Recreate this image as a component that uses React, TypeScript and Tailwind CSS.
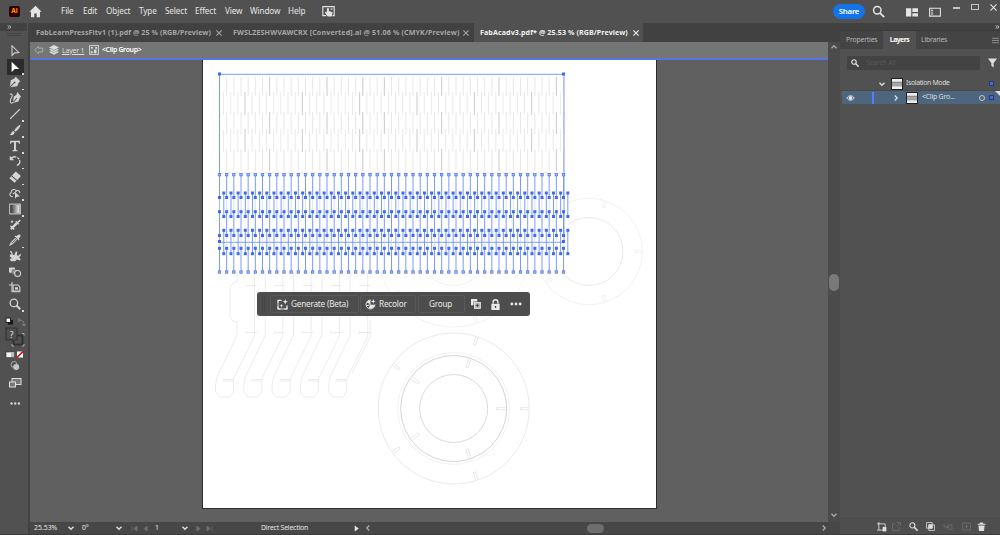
import React from "react";

const COLS = Array.from({ length: 49 }, (_, k) => 219.5 + k * 7.167);

const Svg = ({ c = "", vb = "0 0 16 16", children }: { c?: string; vb?: string; children: React.ReactNode }) => (
  <svg viewBox={vb} className={"shrink-0 " + c} fill="none" stroke="currentColor" strokeWidth="1.4">
    {children}
  </svg>
);

const Chevron = ({ c = "", d }: { c?: string; d: string }) => (
  <Svg c={"h-2 w-2 " + c}>
    <path d={d} strokeWidth="2.6" />
  </Svg>
);
const DOWN = "M3 5.5l5 5 5-5";
const UP = "M3 10.5l5-5 5 5";
const RIGHT = "M5.5 3l5 5-5 5";
const LEFT = "M10.5 3l-5 5 5 5";

const menu = [
  { t: "File", w: "w-[22px]" },
  { t: "Edit", w: "w-[23px]" },
  { t: "Object", w: "w-[33px]" },
  { t: "Type", w: "w-[26px]" },
  { t: "Select", w: "w-[30px]" },
  { t: "Effect", w: "w-[30px]" },
  { t: "View", w: "w-[25px]" },
  { t: "Window", w: "w-[38px]" },
  { t: "Help", w: "w-[34px]" },
];

function TopBar() {
  return (
    <header className="flex h-[23px] shrink-0 items-center bg-[#515151] text-[#e4e4e4]">
      <div className="ml-[9px] flex h-[11px] w-[11px] items-center justify-center rounded-[2px] bg-[#330000] text-[6.5px] font-bold leading-none text-[#ff9a00]">
        Ai
      </div>
      <Svg c="ml-[9px] mr-[19px] h-[13px] w-[13px]">
        <path d="M8 1L.5 8.200h2V15h4v-4.500h3V15h4V8.200h2z" fill="currentColor" stroke="none" />
      </Svg>
      {menu.map((m) => (
        <span key={m.t} className={"shrink-0 whitespace-nowrap text-[8.200px] leading-none tracking-[-0.120px] " + m.w}>
          {m.t}
        </span>
      ))}
      <Svg c="h-[13px] w-[13px]">
        <path d="M5 13H1V2h14v11h-2" />
        <path d="M6 4v5L4.500 8.200 3.500 9.500 7 14h5l1-5-4.500-1.500V4z" fill="currentColor" stroke="none" />
        <path d="M10.500 5h2.500" />
      </Svg>
      <div className="flex-1" />
      <div className="flex h-[15px] w-[32px] items-center justify-center rounded-full bg-[#1473e6] text-[7.800px] font-semibold leading-none tracking-[-0.250px] text-white">
        Share
      </div>
      <Svg c="ml-[7px] h-[13px] w-[13px]">
        <circle cx="6.500" cy="6.500" r="4.600" strokeWidth="1.800" />
        <path d="M10 10l5 5" strokeWidth="2.200" />
      </Svg>
      <Svg c="ml-[21px] h-[12px] w-[12px]">
        <path d="M0 3h7v11H0zM8.500 3H16v5H8.500zM8.500 9.500H16V14H8.500z" fill="currentColor" stroke="none" />
      </Svg>
      <Svg c="ml-[11px] h-[12px] w-[12px]">
        <path d="M.800 3h14.400v10.500H.800z" />
        <path d="M2.500 5h3v1.300h-3zM2.500 7.500h3v1.300h-3zM2.500 10h3v1.300h-3z" fill="currentColor" stroke="none" />
      </Svg>
      <div className="ml-[12px] mt-[-7px] h-[2px] w-[7px] bg-[#c4c4c4]" />
      <div className="ml-[11px] mt-[-10px] h-[6px] w-[8px] border-[1.500px] border-[#c4c4c4]" />
      <Svg c="ml-[11px] mr-[3px] mt-[-9px] h-[7px] w-[7px]">
        <path d="M1 1l14 14M15 1L1 15" strokeWidth="2.500" />
      </Svg>
    </header>
  );
}

const solid = { fill: "currentColor", stroke: "none" };

const tools: { i: React.ReactNode; sel?: boolean; corner?: boolean }[] = [
  { i: <path d="M4 1v13l3.500-3.500L13 10z" /> },
  { i: <path d="M3.500 1v14l4-4.200 6-.3z" {...solid} />, sel: true, corner: true },
  { i: <g><path d="M9 1l6 6-2 1.500-2 5L1 15l1.500-9.500 5-2.500z" {...solid} /><path d="M1.500 14.500L7 9" stroke="#515151" /><circle cx="7.500" cy="8.500" r="1.200" fill="#515151" stroke="none" /></g>, corner: true },
  { i: <g><path d="M11 0l5 6-1.500 1.500-2 5L5 14.500 6.500 6l3.500-2.500z" {...solid} /><path d="M5.500 14L10.500 8" stroke="#515151" /><path d="M1 3c2-1 4 0 3 3s-4 6-1.500 8.500c1 .8 2.500 0 3-1" /></g> },
  { i: <path d="M1.500 14.500l13-13" strokeWidth="1.700" />, corner: true },
  { i: <path d="M15.500.500c-3 1-7 5-8.500 8l1.700 1.700C12 8 15 4 15.500.500zM6 9.200c-2 0-2.500 1.500-3 3C2.700 13.500 1.500 14 .500 14c2 1.700 6.500 1.500 7-3z" {...solid} />, corner: true },
  { i: <path d="M1.500 1h13v4h-1.200L12.500 3H9.300v10l2 .7V15H4.700v-1.300l2-.7V3H3.500l-.8 2H1.500z" {...solid} />, corner: true },
  { i: <g><path d="M2 6c2-4 8-5 11-1s1 8-3 9" strokeDasharray="9 1.500 3 1.500" strokeWidth="1.800" /><path d="M1 1v6h6z" {...solid} /></g>, corner: true },
  { i: <g><path d="M9 .500l7 6-8.500 9-7-6z" {...solid} /><path d="M3.500 6.500l7 6" stroke="#515151" /></g>, corner: true },
  { i: <g><path d="M5 13c-4 0-5-4-2-6 0-4 5-5 7-2 3-1 5 1 4 3" /><path d="M5 9c2-1 3-1 5-4" /><path d="M8 6.500v9l2.500-2.500 4-.2z" {...solid} /></g>, corner: true },
  { i: <g><rect x="1" y="1.500" width="14" height="13" /><rect x="2" y="2.500" width="12" height="11" fill="url(#tg)" stroke="none" /></g>, corner: true },
  { i: <g><path d="M2.500 13.500L10.500 5.500" strokeWidth="3.400" /><path d="M10 6l5-4.500M9 3l4 4M2 9l5 5" strokeWidth="1.800" /><path d="M2.500 3.500h3M4 2v3" /></g> },
  { i: <g><path d="M15 1c-2-1-3.500.5-5 2L8.500 2 7.500 3l5.500 5.500 1-1L13 6c2-1.500 3-3.500 2-5z" {...solid} /><path d="M9 5.500l-6 6-1.500 3 3-1.500 6-6" /></g>, corner: true },
  { i: <path d="M1 1l3 1 1 4 2 1 2-5 2 0-.5 5 2 .5L15 5l1 1.500-2.500 3.500 2 2-1 2-4-1.500L8 15H2.500L1 12l3-1-3-2.500L1.500 6l2-.5z" {...solid} /> },
  { i: <g><rect x="0" y="2" width="8" height="7" rx="1" {...solid} /><rect x="4" y="5" width="7" height="6" rx="1" fill="#999" stroke="#555" strokeWidth=".7" /><circle cx="11.500" cy="10" r="4" fill="#515151" /></g> },
  { i: <g><path d="M4 0v13h11M0 4h5" /><path d="M5.500 4H12l2.500 2.500V12h-9z" /><path d="M8 7h4v3H8z" {...solid} /></g> },
  { i: <g><circle cx="6.500" cy="6.500" r="5" strokeWidth="1.700" /><path d="M10 10l5 5" strokeWidth="2.600" /></g>, corner: true },
];

function Toolbar() {
  return (
    <aside className="flex w-[30px] shrink-0 flex-col items-center border-r-2 border-[#424242] bg-[#515151] pr-[1px] text-[#d4d4d4]">
      <div className="flex h-2 w-full shrink-0 items-center bg-[#424242] pl-[7px]">
        <Svg c="h-[4px] w-[5px]"><path d="M1 1l6 7-6 7M8 1l6 7-6 7" strokeWidth="3" /></Svg>
      </div>
      <div className="mt-[2px] h-[3px] w-[14px] shrink-0 border-y border-[#444]" />
      <div className="mt-[7px] flex flex-col items-center pl-[3px]">
        {tools.map((t, n) => (
          <div key={n} className={"relative flex h-[15.800px] w-[17px] items-center justify-center " + (t.sel ? "bg-[#2b2b2b] text-white" : "")}>
            <Svg c="h-[12px] w-[12px]">
              <defs>
                <linearGradient id="tg"><stop offset="0" stopColor="#333" /><stop offset="1" stopColor="#eee" /></linearGradient>
              </defs>
              {t.i}
            </Svg>
            {t.corner && <span className="absolute bottom-0 right-0 h-[1.500px] w-[1.500px] bg-[#d8d8d8]" />}
          </div>
        ))}
      </div>
      <svg viewBox="0 0 24 102" className="mt-[3px] h-[102px] w-[24px] shrink-0" fill="none">
        <rect x="4" y="3" width="4.500" height="4.500" fill="#fff" stroke="#222" />
        <path d="M6 8.500h4V5" stroke="#111" strokeWidth="1.800" />
        <path d="M17 5c3 0 5 1 5 5M17 3v4M20 9l2 2 2-2" stroke="#858585" />
        <rect x="11.500" y="20.500" width="9" height="9" stroke="#303030" strokeWidth="1.800" />
        <path d="M20 18.500h2v2M12 31h-2v-2M20 31h2v-2" stroke="#aaa" />
        <rect x="4" y="13" width="11" height="12" fill="#4d4d4d" stroke="#333" />
        <text x="9.500" y="22.500" textAnchor="middle" fontSize="8.500" fill="#e5e5e5">?</text>
        <rect x="4" y="37" width="8.500" height="5.500" fill="#f3f3f3" stroke="#333" strokeWidth=".6" />
        <path d="M9 37.500h3V42H9z" fill="#bbb" />
        <rect x="15" y="36.500" width="6" height="6" fill="#fff" />
        <path d="M15 42.500l6-6" stroke="#e00000" strokeWidth="1.600" />
        <circle cx="12" cy="49.500" r="3" stroke="#aaa" />
        <circle cx="14.200" cy="52" r="3" fill="#c5c5c5" />
        <rect x="10" y="63.500" width="9" height="6" fill="#777" stroke="#ddd" />
        <rect x="7.500" y="67" width="6" height="5" fill="#777" stroke="#ddd" />
        <g fill="#d4d4d4"><circle cx="9.500" cy="88.500" r="1.200" /><circle cx="13.200" cy="88.500" r="1.200" /><circle cx="16.900" cy="88.500" r="1.200" /></g>
      </svg>
    </aside>
  );
}

function TabBar() {
  const X = () => (
    <Svg c="h-[6px] w-[6px]"><path d="M1 1l14 14M15 1L1 15" strokeWidth="2.800" /></Svg>
  );
  return (
    <div className="flex h-[19px] shrink-0 items-stretch bg-[#414141] text-[7.100px] font-bold leading-none text-[#a6a6a6]">
      <div className="flex w-[196px] items-center whitespace-nowrap pl-[6px]">
        <span className="w-[180px] tracking-[0.070px]">FabLearnPressFitv1 (1).pdf @ 25 % (RGB/Preview)</span>
        <X />
      </div>
      <div className="flex w-[248px] items-center whitespace-nowrap pl-[7px]">
        <span className="w-[230px] tracking-[0.140px]">FWSLZESHWVAWCRX [Converted].ai @ 51.06 % (CMYK/Preview)</span>
        <X />
      </div>
      <div className="flex w-[169px] items-center whitespace-nowrap bg-[#515151] pl-[6px] text-[#f0f0f0]">
        <span className="w-[153px] tracking-[0.100px]">FabAcadv3.pdf* @ 25.53 % (RGB/Preview)</span>
        <X />
      </div>
    </div>
  );
}

function Breadcrumb() {
  return (
    <div className="flex h-[18px] shrink-0 items-center border-b-2 border-[#5474e8] bg-[#757575] pl-[4px] text-[7px] leading-none text-[#dedede]">
      <Svg c="h-[10px] w-[10px] text-[#b5b5b5]"><path d="M1 8l6-6v3h7v6H7v3z" /></Svg>
      <Svg c="ml-[5px] h-[10px] w-[10px]">
        <path d="M8 0l8 4-8 4-8-4zM0 7.500l3-1.200 5 2.700 5-2.700 3 1.200-8 4zM0 11l3-1.200L8 12.500l5-2.700 3 1.200-8 4.500z" fill="currentColor" stroke="none" />
      </Svg>
      <span className="ml-[3px] w-[27px] whitespace-nowrap tracking-[-0.200px] underline underline-offset-1">Layer 1</span>
      <Svg c="h-[10px] w-[10px]">
        <rect x="1" y="1" width="14" height="14" />
        <path d="M3 3h3v3H3zM10 3h3v3h-3zM3 10h3v3H3zM8 7h4v6H8z" fill="currentColor" stroke="none" />
      </Svg>
      <span className="ml-[3px] whitespace-nowrap text-[6.900px] font-semibold tracking-[-0.320px] text-white">&lt;Clip Group&gt;</span>
    </div>
  );
}

const ringNotches = (cx: number, cy: number, r1: number, r2: number) =>
  [0, 72, 144, 216, 288].map((a) => (
    <path key={a} transform={`translate(${cx} ${cy}) rotate(${a})`} d={`M${r1} -1.200H${r2}M${r1} 1.200H${r2}M${r1} -1.200V1.200`} />
  ));

function Artwork() {
  const squares: [number, number][] = [];
  COLS.forEach((x) => {
    squares.push([x, 197.500], [x, 211.700], [x, 235.500], [x, 248.300]);
    squares.push([x + 4.300, 193], [x + 4.300, 216.500], [x + 4.300, 230.300], [x + 4.300, 253.700]);
  });
  squares.push([219.500, 241.500], [563.500, 241.500], [219.500, 74], [563.500, 74]);
  return (
    <svg viewBox="203 60 453 448" className="block h-[448px] w-[453px]" fill="none">
      <g stroke="#f0f0f0" strokeWidth=".9">
        <circle cx="453.500" cy="251.500" r="75.500" />
        <circle cx="453.500" cy="251.500" r="34" />
        {ringNotches(453.5, 251.5, 67, 75)}
        <circle cx="589" cy="251.500" r="53.300" />
        <circle cx="589" cy="251.500" r="34" stroke="#e6e6e6" />
        {ringNotches(589, 251.5, 46, 53)}
        <circle cx="453.700" cy="408.500" r="75.500" stroke="#e8e8e8" />
        <circle cx="453.700" cy="408.500" r="56" />
        <circle cx="453.700" cy="408.500" r="53" stroke="#cfcfcf" />
        <circle cx="453.700" cy="408.500" r="34" stroke="#d6d6d6" />
      </g>
      <g stroke="#e0e0e0" strokeWidth=".7">
        {ringNotches(453.7, 408.5, 43, 52)}
        {ringNotches(453.7, 408.5, 67, 75)}
      </g>
      <g stroke="#e7e7e7" strokeWidth=".8">
        {[0, 1, 2, 3, 4].map((n) => (
          <g key={n} transform={`translate(${n * 28.3} 0)`}>
            <path d={n === 0 ? "M237 272v10l-4 1-3 4v30l3 4 4 1v13l-20 42-1.500 8v7l4 5h10l4-5v-13l21-43v-63" : "M237 272v63l-20 42-1.500 8v7l4 5h10l4-5v-13l21-43v-63"} />
            <path d="M246 285.500h11M246 332.500h11M246 331v3M223 379.500h11M223 381h10" />
          </g>
        ))}
        <path d="M359 332.500h11M370 320v17l-18 36" />
      </g>
      <path d="M219 74h348v198H219z" fill="#fff" />
      {COLS.map((x, k) => (
        <g key={k} strokeWidth=".8">
          <path d={`M${x} 77V96M${x} 112V134M${x} 149V171`} stroke={k % 8 === 7 || k === 20 ? "#bcbcbc" : "#e2e2e2"} />
          {k < 48 && <path d={`M${x + 4} 92V115M${x + 4} 129V152`} stroke={k % 8 === 3 ? "#bcbcbc" : "#e5e5e5"} />}
        </g>
      ))}
      <path d="M221 173h342" stroke="#dedede" strokeWidth=".7" strokeDasharray="5 2" />
      <g stroke="#7c9af3" strokeWidth="1">
        <path d="M219.500 242.300V74.300H564V242.300H219.500" />
        {COLS.map((x, k) => (
          <path key={k} d={`M${x} 174V197.500M${x + 4.3} 193V216.500M${x} 211.700V235.500M${x + 4.3} 230.300V253.700M${x} 248.300V272`} />
        ))}
      </g>
      <g stroke="#c4d0f8" strokeWidth=".6">
        {COLS.map((x, k) => (
          <path key={k} d={`M${x} 197V212M${x} 235V249`} />
        ))}
      </g>
      <g fill="#3f6af0">
        {squares.map(([x, y], n) => (
          <rect key={n} x={x - 1.5} y={y - 1.5} width="3" height="3" />
        ))}
      </g>
      <g fill="#a9bcf6" stroke="#5579ec" strokeWidth=".8">
        {COLS.map((x, n) => (
          <g key={n}>
            <rect x={x - 1.2} y="173.500" width="2.400" height="2.400" />
            <rect x={x - 1.2} y="270.800" width="2.400" height="2.400" />
          </g>
        ))}
      </g>
    </svg>
  );
}

function ContextBar() {
  return (
    <div className="absolute left-[227px] top-[232px] flex h-[24px] w-[273px] items-center rounded-[3px] bg-[#4d4d4d] text-[8.200px] leading-none tracking-[-0.200px] text-[#e8e8e8]">
      <div className="ml-[5px] h-[16px] w-[3px] border-x border-[#454545]" />
      <div className="ml-[5px] flex h-[18px] w-[89px] items-center whitespace-nowrap rounded-[2px] border border-[#595959] pl-[6px]">
        <Svg c="mr-[3px] h-[11px] w-[11px]">
          <path d="M7 2H1.500v12.500H14.500V9" />
          <path d="M1.500 5V2H5M1.500 11v3.500H5M11 14.500h3.500V11" strokeWidth="1.800" />
          <path d="M12 0l1 3 3 1-3 1-1 3-1-3-3-1 3-1zM6.500 7l.8 2 2 .8-2 .8-.8 2-.8-2-2-.8 2-.8z" fill="currentColor" stroke="none" />
        </Svg>
        Generate (Beta)
      </div>
      <div className="ml-[1px] flex h-[18px] w-[56px] items-center whitespace-nowrap rounded-[2px] border border-[#595959] pl-[4px]">
        <Svg c="mr-[3px] h-[11px] w-[11px]">
          <path d="M8 1.500a6.500 6.500 0 1 0 6.500 6.500" />
          <path d="M8 1.500v6L2.500 5A6.500 6.500 0 0 1 8 1.500zM8 8.500H14A6 6 0 0 1 5 13zM12 0l1 2.500 2.500 1L13 4.500 12 7l-1-2.500-2.500-1L11 2.500z" fill="currentColor" stroke="none" />
          <path d="M8 8L2 10" />
        </Svg>
        Recolor
      </div>
      <div className="ml-[2px] flex h-[18px] w-[47px] items-center justify-center rounded-[2px] border border-[#595959] pr-[2px]">Group</div>
      <Svg c="ml-[6px] h-[10px] w-[10px]">
        <path d="M0 0h10v4H4v6H0z" fill="currentColor" stroke="none" />
        <rect x="5.500" y="5.500" width="9.500" height="9.500" fill="#bbb" />
        <path d="M10.200 7.500v5.500M7.500 10.200H13" stroke="#444" />
      </Svg>
      <Svg c="ml-[9px] h-[11px] w-[11px]">
        <path d="M2 7h12v9H2z" fill="currentColor" stroke="none" />
        <path d="M4.500 7V4.500a3.500 3.500 0 0 1 7 0V7" strokeWidth="2" />
        <path d="M8 10v3" stroke="#444" strokeWidth="2" />
      </Svg>
      <Svg c="ml-[9px] h-[12px] w-[12px]">
        <g fill="currentColor" stroke="none"><circle cx="2.500" cy="8" r="1.900" /><circle cx="8" cy="8" r="1.900" /><circle cx="13.500" cy="8" r="1.900" /></g>
      </Svg>
    </div>
  );
}

function StatusBar() {
  return (
    <div className="flex h-[12px] shrink-0 items-center bg-[#474747] pl-[4px] text-[6.900px] leading-none tracking-[-0.200px] text-[#e6e6e6]">
      <span className="w-[33px] tracking-normal">25.53%</span>
      <Chevron d={DOWN} />
      <span className="ml-[7px] w-[33px]">0°</span>
      <Chevron d={DOWN} />
      <Svg c="ml-[8px] h-[7px] w-[7px] text-[#707070]"><path d="M2 2v12M14 2L6 8l8 6z" fill="currentColor" /></Svg>
      <Svg c="ml-[4px] h-[7px] w-[7px] text-[#707070]"><path d="M12 2L4 8l8 6z" fill="currentColor" /></Svg>
      <span className="ml-[6px] w-[26px]">1</span>
      <Chevron d={DOWN} />
      <Svg c="ml-[6px] h-[7px] w-[7px] text-[#707070]"><path d="M4 2l8 6-8 6z" fill="currentColor" /></Svg>
      <Svg c="ml-[4px] h-[7px] w-[7px] text-[#707070]"><path d="M14 2v12M2 2l8 6-8 6z" fill="currentColor" /></Svg>
      <span className="ml-[48px] w-[92px] whitespace-nowrap">Direct Selection</span>
      <Svg c="h-[7px] w-[7px]"><path d="M4 1l9 7-9 7z" fill="currentColor" stroke="none" /></Svg>
      <Chevron c="ml-[4px] text-[#aaaaaa]" d={LEFT} />
      <div className="ml-[215px] h-[9px] w-[17px] rounded-full bg-[#6e6e6e]" />
      <Chevron c="ml-[216px] text-[#aaaaaa]" d={RIGHT} />
    </div>
  );
}

const Thumb = () => (
  <Svg c="h-[12px] w-[12px]" vb="0 0 12 12">
    <rect x=".5" y=".5" width="11" height="11" fill="#eeeeee" stroke="#222" strokeWidth="1" />
    <rect x="1" y="4" width="10" height="4.500" fill="#a5a5a5" stroke="none" />
    <path d="M1 4.200h10" stroke="#777" strokeWidth=".8" />
  </Svg>
);

function LayersPanel() {
  return (
    <aside className="flex w-[160px] shrink-0 flex-col bg-[#515151] text-[6.900px] leading-none tracking-[-0.200px] text-[#dedede]">
      <div className="flex h-[8px] shrink-0 items-center justify-end border-b border-[#3a3a3a] bg-[#414141]">
        <Svg c="h-[4px] w-[5px]"><path d="M1 1l6 7-6 7M8 1l6 7-6 7" strokeWidth="3" /></Svg>
      </div>
      <div className="flex h-[18px] shrink-0 items-stretch bg-[#444444] text-[#b8b8b8]">
        <div className="flex w-[43px] items-center pl-[6px]">Properties</div>
        <div className="flex w-[33px] items-center justify-center bg-[#515151] font-bold tracking-[-0.550px] text-white">Layers</div>
        <div className="flex w-[35px] items-center pl-[5px]">Libraries</div>
        <div className="flex flex-1 items-center justify-end pr-[1px]">
          <Svg c="h-[7px] w-[7px]"><path d="M0 3h16M0 8h16M0 13h16" /></Svg>
        </div>
      </div>
      <div className="mt-[7px] flex h-[14px] shrink-0 items-center pl-[7px]">
        <div className="flex h-[14px] w-[133px] items-center rounded-[2px] bg-[#434343] pl-[4px]">
          <Svg c="h-[8px] w-[8px]"><circle cx="6" cy="6" r="4.500" strokeWidth="2.400" /><path d="M9.500 9.500l6 6" strokeWidth="3" /></Svg>
          <span className="ml-[7px] text-[#585858]">Search All</span>
        </div>
        <Svg c="ml-[8px] h-[10px] w-[9px]"><path d="M0 0h16l-6 8v8l-4-3V8z" fill="currentColor" stroke="none" /></Svg>
      </div>
      <div className="mt-[7px] flex h-[14px] shrink-0 items-center border-b border-[#494949] pl-[38px]">
        <Chevron d={DOWN} />
        <div className="ml-[5px]"><Thumb /></div>
        <span className="ml-[3px] w-[83px] whitespace-nowrap tracking-[-0.350px]">Isolation Mode</span>
        <span className="h-[5px] w-[5px] border border-[#24406f] bg-[#3d6ae0]" />
      </div>
      <div className="ml-[2px] flex h-[13px] shrink-0 items-center bg-[#4d657e] pl-[4px]">
        <Svg c="h-[8px] w-[9px] text-[#f0f0f0]"><path d="M.500 8c4-6 11-6 15 0-4 6-11 6-15 0z" strokeWidth="1.700" /><circle cx="8" cy="8" r="3" fill="currentColor" /></Svg>
        <span className="ml-[17px] h-[12px] w-[2px] bg-[#4f80ff]" />
        <Chevron c="ml-[18px]" d={RIGHT} />
        <div className="ml-[6px]"><Thumb /></div>
        <span className="ml-[4px] w-[59px] whitespace-nowrap">&lt;Clip Gro...</span>
        <span className="h-[6px] w-[6px] rounded-full border border-[#c9c9c9]" />
        <span className="ml-[4px] h-[5px] w-[5px] border border-[#24406f] bg-[#3d6ae0]" />
        <Svg c="ml-[1px] h-[5px] w-[5px] self-start"><path d="M0 0h16v16z" fill="currentColor" stroke="none" /></Svg>
      </div>
      <div className="flex-1" />
      <div className="flex h-[16px] shrink-0 items-center border-t border-[#4a4a4a] bg-[#4e4e4e] pl-[37px]">
        <Svg c="h-[10px] w-[10px]"><path d="M3 0v13h10M0 3h13v5M0 13h3" /><path d="M9 8h6v7H9z" fill="currentColor" stroke="none" /></Svg>
        <Svg c="ml-[5px] h-[9px] w-[9px] text-[#707070]"><path d="M5 3H1v12h12V9M8 1h7v7M15 1L8 8" /></Svg>
        <Svg c="ml-[8px] h-[9px] w-[9px]"><circle cx="6" cy="6" r="4.500" strokeWidth="1.800" /><path d="M9.500 9.500l6 6" strokeWidth="2.800" /></Svg>
        <Svg c="ml-[8px] h-[9px] w-[9px]"><path d="M1 1h10v10H1zM5 5h10v10H5z" /><path d="M5 5h6v6H5z" fill="currentColor" /></Svg>
        <Svg c="ml-[8px] h-[9px] w-[10px] text-[#707070]"><path d="M1 3v6h7M5 6l3 3-3 3M9 5h6v8H9z" /></Svg>
        <Svg c="ml-[9px] h-[9px] w-[9px] text-[#707070]"><path d="M1 2h14v12H1zM8 5v6M5 8h6" /></Svg>
        <Svg c="ml-[6px] h-[9px] w-[9px]"><path d="M1 3h14v2H1zM5 1h6v2H5zM2.500 6h11l-1 10h-9z" fill="currentColor" stroke="none" /></Svg>
      </div>
    </aside>
  );
}

export default function App() {
  return (
    <div className="flex h-[535px] w-[1000px] flex-col overflow-hidden bg-[#3c3c3c] font-['Noto_Sans','Open_Sans',sans-serif]">
      <TopBar />
      <div className="flex h-[511px] shrink-0">
        <Toolbar />
        <main className="flex w-[810px] shrink-0 flex-col">
          <TabBar />
          <div className="flex h-[480px] shrink-0">
            <div className="flex w-[798px] shrink-0 flex-col">
              <Breadcrumb />
              <div className="relative flex flex-1 overflow-hidden bg-[#606060] pl-[172px]">
                <div className="h-[449px] w-[455px] border border-t-0 border-[#2c2c2c] bg-white">
                  <Artwork />
                </div>
                <ContextBar />
              </div>
            </div>
            <div className="flex w-[12px] shrink-0 flex-col items-center bg-[#4b4b4b] text-[#aaaaaa]">
              <Chevron c="mt-px" d={UP} />
              <div className="mt-[223px] h-[17px] w-[10px] rounded-full bg-[#797979]" />
              <Chevron c="mt-[220px]" d={DOWN} />
            </div>
          </div>
          <StatusBar />
        </main>
        <LayersPanel />
      </div>
    </div>
  );
}
